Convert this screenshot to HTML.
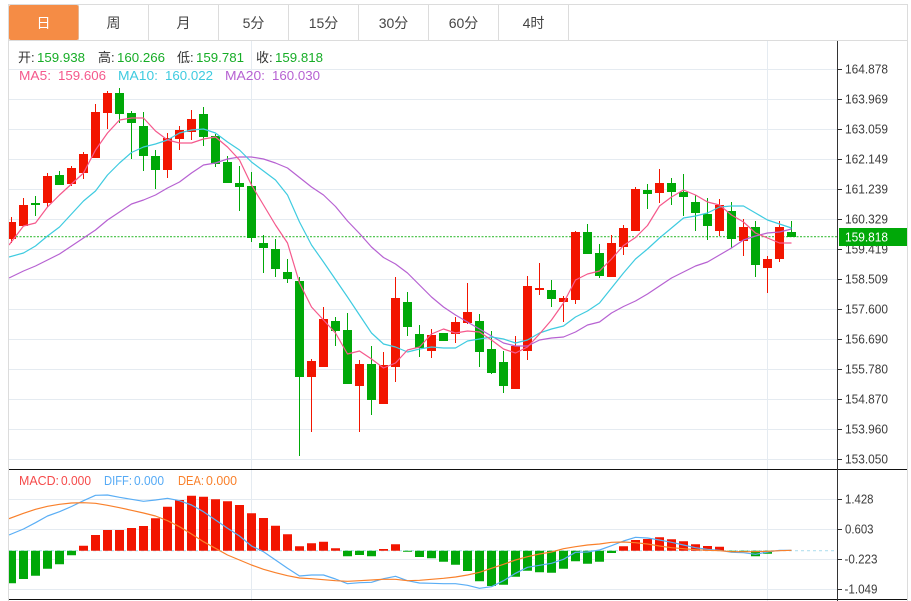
<!DOCTYPE html>
<html lang="zh">
<head>
<meta charset="utf-8">
<title>K线图</title>
<style>
html,body{margin:0;padding:0;background:#fff;width:911px;height:601px;overflow:hidden}
svg{display:block}
text{font-family:"Liberation Sans","Noto Sans CJK SC",sans-serif;font-size:13px}
.ax text{font-size:12.6px;fill:#3c3c3c}
.tab text{font-size:14px;fill:#444;text-anchor:middle}
.v{fill:#17ad27}
.l{fill:#333}
.line{fill:none;stroke-width:1.2;stroke-linejoin:round}
</style>
</head>
<body>
<svg width="911" height="601" viewBox="0 0 911 601" xmlns="http://www.w3.org/2000/svg">
<defs><clipPath id="c"><rect x="9" y="41" width="828" height="560"/></clipPath></defs>

<!-- grid -->
<path fill="none" stroke="#e5ebf1" stroke-width="1" d="M9 69.5H837M9 99.5H837M9 129.5H837M9 159.5H837M9 189.5H837M9 219.5H837M9 249.5H837M9 279.5H837M9 309.5H837M9 339.5H837M9 369.5H837M9 399.5H837M9 429.5H837M9 459.5H837M9 499.5H837M9 529.5H837M9 559.5H837M9 589.5H837M251.5 41V601M767.5 41V601"/>

<!-- frame -->
<path fill="none" stroke="#dcdcdc" stroke-width="1" d="M8.5 4V601M907.5 4V601M8 4.5H908M8 40.5H908M78.5 4V40M148.5 4V40M218.5 4V40M288.5 4V40M358.5 4V40M428.5 4V40M498.5 4V40M568.5 4V40"/>

<!-- tabs -->
<rect x="9" y="5" width="69.5" height="35" rx="2" fill="#f58c45"/>
<g class="tab">
<text x="43.5" y="28" style="fill:#fff">日</text>
<text x="113.5" y="28">周</text>
<text x="183.5" y="28">月</text>
<text x="253.5" y="28">5分</text>
<text x="323.5" y="28">15分</text>
<text x="393.5" y="28">30分</text>
<text x="463.5" y="28">60分</text>
<text x="533.5" y="28">4时</text>
</g>

<g clip-path="url(#c)">
<!-- price line -->
<path d="M9 236.7H837" stroke="#3fbf3f" stroke-width="1.2" stroke-dasharray="2 1.5" fill="none"/>

<!-- red candles -->
<path fill="none" stroke="#f21500" stroke-width="1" d="M11.5 217V243M23.5 198V226M47.5 173V207M71.5 166V186M83.5 152V179M95.5 104V158M107.5 91V129M167.5 133V178M179.5 126V150M191.5 110V140M311.5 359V432M323.5 307V367M359.5 360V432M383.5 352V404M395.5 277V382M431.5 329V358M455.5 317V343M467.5 283V324M515.5 336V389M527.5 276V360M539.5 263V295M563.5 296V322M575.5 231V304M611.5 235V277M623.5 225V255M635.5 187V231M659.5 169V203M719.5 199V236M743.5 219V256M767.5 256V293M779.5 221V262"/>
<path fill="#f21500" d="M7 222h9v17h-9zM19 205h9v21h-9zM43 176h9v27h-9zM67 168h9v16h-9zM79 154h9v19h-9zM91 112h9v46h-9zM103 93h9v20h-9zM163 138h9v32h-9zM175 130h9v9h-9zM187 119h9v13h-9zM307 361h9v16h-9zM319 319h9v48h-9zM355 364h9v22h-9zM379 365h9v39h-9zM391 298h9v69h-9zM427 335h9v16h-9zM451 322h9v12h-9zM463 312h9v11h-9zM511 346h9v43h-9zM523 286h9v65h-9zM535 288h9v2h-9zM559 298h9v4h-9zM571 232h9v68h-9zM607 243h9v34h-9zM619 228h9v19h-9zM631 189h9v42h-9zM655 183h9v10h-9zM715 205h9v26h-9zM739 227h9v14h-9zM763 259h9v9h-9zM775 227h9v32h-9z"/>

<!-- green candles -->
<path fill="none" stroke="#00a808" stroke-width="1" d="M35.5 196V216M59.5 171V185M119.5 88V123M131.5 111V159M143.5 112V171M155.5 150V189M203.5 107V146M215.5 134V167M227.5 156V183M239.5 166V211M251.5 172V242M263.5 235V273M275.5 239V277M287.5 259V283M299.5 277V456M335.5 317V346M347.5 313V384M371.5 346V415M407.5 292V336M419.5 325V357M443.5 333V341M479.5 314V367M491.5 331V374M503.5 351V393M551.5 280V307M587.5 224V254M599.5 244V278M647.5 184V209M671.5 178V205M683.5 174V216M695.5 195V231M707.5 198V240M731.5 202V248M755.5 221V277M791.5 221V237"/>
<path fill="#00a808" d="M31 203h9v2h-9zM55 175h9v10h-9zM115 93h9v21h-9zM127 113h9v10h-9zM139 126h9v30h-9zM151 156h9v14h-9zM199 114h9v23h-9zM211 136h9v28h-9zM223 162h9v21h-9zM235 183h9v4h-9zM247 186h9v52h-9zM259 243h9v5h-9zM271 249h9v20h-9zM283 272h9v7h-9zM295 281h9v96h-9zM331 321h9v10h-9zM343 330h9v54h-9zM367 364h9v36h-9zM403 302h9v25h-9zM415 334h9v14h-9zM439 333h9v8h-9zM475 321h9v31h-9zM487 349h9v24h-9zM499 362h9v24h-9zM547 290h9v9h-9zM583 232h9v22h-9zM595 253h9v23h-9zM643 190h9v4h-9zM667 183h9v9h-9zM679 192h9v5h-9zM691 202h9v11h-9zM703 214h9v12h-9zM727 211h9v28h-9zM751 227h9v38h-9zM787 232h9v5h-9z"/>

<!-- MA20 -->
<polyline class="line" stroke="#b762d2" points="9,278 23.5,271 35.5,266 47.5,260 59.5,254 71.5,246 83.5,238 95.5,230 107.5,220 119.5,212 131.5,204 143.5,200 155.5,195 167.5,188 179.5,182 191.5,173 203.5,165 215.5,163 227.5,159 239.5,157 251.5,157 263.5,159 275.5,163 287.5,168 299.5,177.5 311.5,187 323.5,195 335.5,206.5 347.5,221 359.5,233.5 371.5,247 383.5,257.5 395.5,264 407.5,273 419.5,285 431.5,297 443.5,307 455.5,315 467.5,322 479.5,329 491.5,336 503.5,343 515.5,346 527.5,346 539.5,340 551.5,338 563.5,337 575.5,332 587.5,325 599.5,322 611.5,313 623.5,306.5 635.5,301 647.5,294 659.5,286 671.5,278 683.5,272 695.5,266 707.5,262 719.5,255 731.5,248 743.5,240 755.5,236 767.5,233 779.5,232 791.5,229"/>
<!-- MA10 -->
<polyline class="line" stroke="#3fcbe0" points="9,257 23.5,253 35.5,246 47.5,236 59.5,227 71.5,214 83.5,201 95.5,191 107.5,175 119.5,163 131.5,152.5 143.5,147 155.5,144 167.5,140 179.5,133 191.5,130 203.5,129 215.5,133 227.5,142 239.5,150 251.5,162 263.5,171 275.5,180 287.5,195 299.5,222 311.5,245 323.5,262 335.5,279.5 347.5,297 359.5,315 371.5,333 383.5,344 395.5,347 407.5,352 419.5,349 431.5,347 443.5,348 455.5,348 467.5,341 479.5,339 491.5,337 503.5,339 515.5,343 527.5,340 539.5,333 551.5,329 563.5,326 575.5,317 587.5,311 599.5,303 611.5,288 623.5,273 635.5,259 647.5,249 659.5,238 671.5,228 683.5,218 695.5,216 707.5,213 719.5,207 731.5,206 743.5,206 755.5,213 767.5,220 779.5,224 791.5,228"/>
<!-- MA5 -->
<polyline class="line" stroke="#f5598c" points="9,245 23.5,226 35.5,223 47.5,207 59.5,195 71.5,184 83.5,173 95.5,150 107.5,133 119.5,120 131.5,118 143.5,118 155.5,131 167.5,140 179.5,143 191.5,143 203.5,139 215.5,137 227.5,147 239.5,160 251.5,185 263.5,205 275.5,225 287.5,243 299.5,283 311.5,307 323.5,320 335.5,333 347.5,354 359.5,351 371.5,359 383.5,368 395.5,363 407.5,350 419.5,347 431.5,334 443.5,329 455.5,333 467.5,331 479.5,332 491.5,340 503.5,349 515.5,353 527.5,347 539.5,334 551.5,320 563.5,303 575.5,280 587.5,274 599.5,271 611.5,259 623.5,245.5 635.5,237.5 647.5,225.5 659.5,206 671.5,197 683.5,190 695.5,195 707.5,202 719.5,205 731.5,215 743.5,222 755.5,233 767.5,238 779.5,243 791.5,243"/>

<!-- MACD zero line -->
<path d="M9 550.7H834" stroke="#b4e0ef" stroke-width="1.2" stroke-dasharray="3 3" fill="none"/>

<!-- MACD red bars -->
<path fill="#f21500" d="M79 545.7h9v5h-9zM91 535h9v15.7h-9zM103 530h9v20.7h-9zM115 530h9v20.7h-9zM127 528h9v22.7h-9zM139 526h9v24.7h-9zM151 518.3h9v32.4h-9zM163 506.7h9v44h-9zM175 500h9v50.7h-9zM187 495.7h9v55h-9zM199 496.7h9v54h-9zM211 499.3h9v51.4h-9zM223 501.3h9v49.4h-9zM235 505h9v45.7h-9zM247 513.3h9v37.4h-9zM259 518h9v32.7h-9zM271 525.7h9v25h-9zM283 534.3h9v16.4h-9zM295 546.3h9v4.4h-9zM307 543.3h9v7.4h-9zM319 541.7h9v9h-9zM331 548.3h9v2.4h-9zM379 549h9v1.7h-9zM391 544.3h9v6.4h-9zM619 546.3h9v4.4h-9zM631 540h9v10.7h-9zM643 539h9v11.7h-9zM655 537.3h9v13.4h-9zM667 539.3h9v11.4h-9zM679 541.3h9v9.4h-9zM691 544.3h9v6.4h-9zM703 546h9v4.7h-9zM715 546.7h9v4h-9z"/>
<!-- MACD green bars -->
<path fill="#00a808" d="M7 550.7h9v32.6h-9zM19 550.7h9v28.3h-9zM31 550.7h9v25h-9zM43 550.7h9v18h-9zM55 550.7h9v13.6h-9zM67 550.7h9v4.6h-9zM343 550.7h9v5.6h-9zM355 550.7h9v4.3h-9zM367 550.7h9v5.6h-9zM403 550.7h9v1h-9zM415 550.7h9v6.3h-9zM427 550.7h9v7.6h-9zM439 550.7h9v11h-9zM451 550.7h9v14h-9zM463 550.7h9v20.3h-9zM475 550.7h9v30.6h-9zM487 550.7h9v35.3h-9zM499 550.7h9v34h-9zM511 550.7h9v26h-9zM523 550.7h9v20h-9zM535 550.7h9v21.6h-9zM547 550.7h9v22h-9zM559 550.7h9v18h-9zM571 550.7h9v10.6h-9zM583 550.7h9v13h-9zM595 550.7h9v11h-9zM607 550.7h9v2.3h-9zM727 550.7h9v1.3h-9zM739 550.7h9v1.3h-9zM751 550.7h9v5.6h-9zM763 550.7h9v3h-9z"/>

<!-- DIFF -->
<polyline class="line" stroke="#5aaef5" points="9,535 23.5,529 35.5,522.7 47.5,516 59.5,511.7 71.5,506.5 83.5,500.7 95.5,495.3 107.5,495 119.5,497.3 131.5,499.3 143.5,501.3 155.5,500 167.5,498.3 179.5,500.7 191.5,505 203.5,511.7 215.5,520 227.5,528.3 239.5,536 251.5,546 263.5,551.7 275.5,560 287.5,568.3 299.5,576 311.5,575 323.5,575 335.5,579 347.5,583.7 359.5,582.7 371.5,582.3 383.5,578.7 395.5,576.3 407.5,580.7 419.5,583 431.5,583.3 443.5,583.7 455.5,583.7 467.5,585.3 479.5,588.3 491.5,586.7 503.5,580.7 515.5,573.3 527.5,567.3 539.5,565.3 551.5,563.3 563.5,559.3 575.5,552.3 587.5,552 599.5,550 611.5,545.7 623.5,541 635.5,537.3 647.5,538 659.5,540 671.5,542.3 683.5,545 695.5,547.7 707.5,549.3 719.5,550.3 731.5,552.3 743.5,552.7 755.5,554.3 767.5,552 779.5,550.3 791.5,550.3"/>
<!-- DEA -->
<polyline class="line" stroke="#f9802b" points="9,518.7 23.5,513.3 35.5,509.3 47.5,506.3 59.5,504.3 71.5,503 83.5,502.7 95.5,503.3 107.5,505.3 119.5,507.7 131.5,510.3 143.5,513 155.5,516 167.5,520.7 179.5,526.7 191.5,534 203.5,541.7 215.5,548.3 227.5,555 239.5,560 251.5,565 263.5,569.3 275.5,572.7 287.5,575.7 299.5,578 311.5,578.7 323.5,579.7 335.5,580.7 347.5,581.3 359.5,580.7 371.5,580 383.5,579.3 395.5,579.3 407.5,580.7 419.5,580.3 431.5,579.3 443.5,578.3 455.5,577 467.5,575 479.5,572.3 491.5,568.3 503.5,564.3 515.5,560 527.5,556.7 539.5,554 551.5,552 563.5,548.7 575.5,546.7 587.5,545 599.5,544 611.5,542.3 623.5,542 635.5,542.7 647.5,544 659.5,546 671.5,547.7 683.5,548.7 695.5,549.7 707.5,550.3 719.5,550.7 731.5,551.7 743.5,551.7 755.5,551.7 767.5,551.3 779.5,550.7 791.5,550.3"/>
</g>

<!-- axes -->
<path fill="none" stroke="#111" stroke-width="1" d="M9 469.5H907M9 599.5H907"/>
<path fill="none" stroke="#333" stroke-width="1" d="M837.5 41V601M837 69.5h5M837 99.5h5M837 129.5h5M837 159.5h5M837 189.5h5M837 219.5h5M837 249.5h5M837 279.5h5M837 309.5h5M837 339.5h5M837 369.5h5M837 399.5h5M837 429.5h5M837 459.5h5M837 499.5h5M837 529.5h5M837 559.5h5M837 589.5h5"/>
<g class="ax">
<text x="845" y="73.5" textLength="43" lengthAdjust="spacingAndGlyphs">164.878</text>
<text x="845" y="103.5" textLength="43" lengthAdjust="spacingAndGlyphs">163.969</text>
<text x="845" y="133.5" textLength="43" lengthAdjust="spacingAndGlyphs">163.059</text>
<text x="845" y="163.5" textLength="43" lengthAdjust="spacingAndGlyphs">162.149</text>
<text x="845" y="193.5" textLength="43" lengthAdjust="spacingAndGlyphs">161.239</text>
<text x="845" y="223.5" textLength="43" lengthAdjust="spacingAndGlyphs">160.329</text>
<text x="845" y="253.5" textLength="43" lengthAdjust="spacingAndGlyphs">159.419</text>
<text x="845" y="283.5" textLength="43" lengthAdjust="spacingAndGlyphs">158.509</text>
<text x="845" y="313.5" textLength="43" lengthAdjust="spacingAndGlyphs">157.600</text>
<text x="845" y="343.5" textLength="43" lengthAdjust="spacingAndGlyphs">156.690</text>
<text x="845" y="373.5" textLength="43" lengthAdjust="spacingAndGlyphs">155.780</text>
<text x="845" y="403.5" textLength="43" lengthAdjust="spacingAndGlyphs">154.870</text>
<text x="845" y="433.5" textLength="43" lengthAdjust="spacingAndGlyphs">153.960</text>
<text x="845" y="463.5" textLength="43" lengthAdjust="spacingAndGlyphs">153.050</text>
<text x="845" y="503.5" textLength="28.5" lengthAdjust="spacingAndGlyphs">1.428</text>
<text x="845" y="533.5" textLength="28.5" lengthAdjust="spacingAndGlyphs">0.603</text>
<text x="844.5" y="563.5" textLength="33" lengthAdjust="spacingAndGlyphs">-0.223</text>
<text x="844.5" y="593.5" textLength="33" lengthAdjust="spacingAndGlyphs">-1.049</text>
</g>
<rect x="839" y="228" width="68" height="18" fill="#00a808"/>
<text x="845" y="241.5" textLength="43" lengthAdjust="spacingAndGlyphs" style="font-size:12.6px;fill:#fff">159.818</text>

<!-- legend -->
<text class="l" x="18" y="62">开:</text><text class="v" x="37" y="62" textLength="48" lengthAdjust="spacingAndGlyphs">159.938</text>
<text class="l" x="98" y="62">高:</text><text class="v" x="117" y="62" textLength="48" lengthAdjust="spacingAndGlyphs">160.266</text>
<text class="l" x="177" y="62">低:</text><text class="v" x="196" y="62" textLength="48" lengthAdjust="spacingAndGlyphs">159.781</text>
<text class="l" x="256" y="62">收:</text><text class="v" x="275" y="62" textLength="48" lengthAdjust="spacingAndGlyphs">159.818</text>
<text x="19" y="80" fill="#f5598c" textLength="32" lengthAdjust="spacingAndGlyphs">MA5:</text><text x="58" y="80" fill="#f5598c" textLength="48" lengthAdjust="spacingAndGlyphs">159.606</text>
<text x="118" y="80" fill="#3fcbe0" textLength="40" lengthAdjust="spacingAndGlyphs">MA10:</text><text x="165" y="80" fill="#3fcbe0" textLength="48" lengthAdjust="spacingAndGlyphs">160.022</text>
<text x="225" y="80" fill="#b762d2" textLength="40" lengthAdjust="spacingAndGlyphs">MA20:</text><text x="272" y="80" fill="#b762d2" textLength="48" lengthAdjust="spacingAndGlyphs">160.030</text>
<text x="19" y="485" fill="#f54a4a" textLength="40" lengthAdjust="spacingAndGlyphs">MACD:</text><text x="61" y="485" fill="#f54a4a" textLength="30" lengthAdjust="spacingAndGlyphs">0.000</text>
<text x="104" y="485" fill="#55aaf5" textLength="28" lengthAdjust="spacingAndGlyphs">DIFF:</text><text x="134" y="485" fill="#55aaf5" textLength="30" lengthAdjust="spacingAndGlyphs">0.000</text>
<text x="178" y="485" fill="#f9802b" textLength="26" lengthAdjust="spacingAndGlyphs">DEA:</text><text x="206" y="485" fill="#f9802b" textLength="31" lengthAdjust="spacingAndGlyphs">0.000</text>
</svg>
</body>
</html>
